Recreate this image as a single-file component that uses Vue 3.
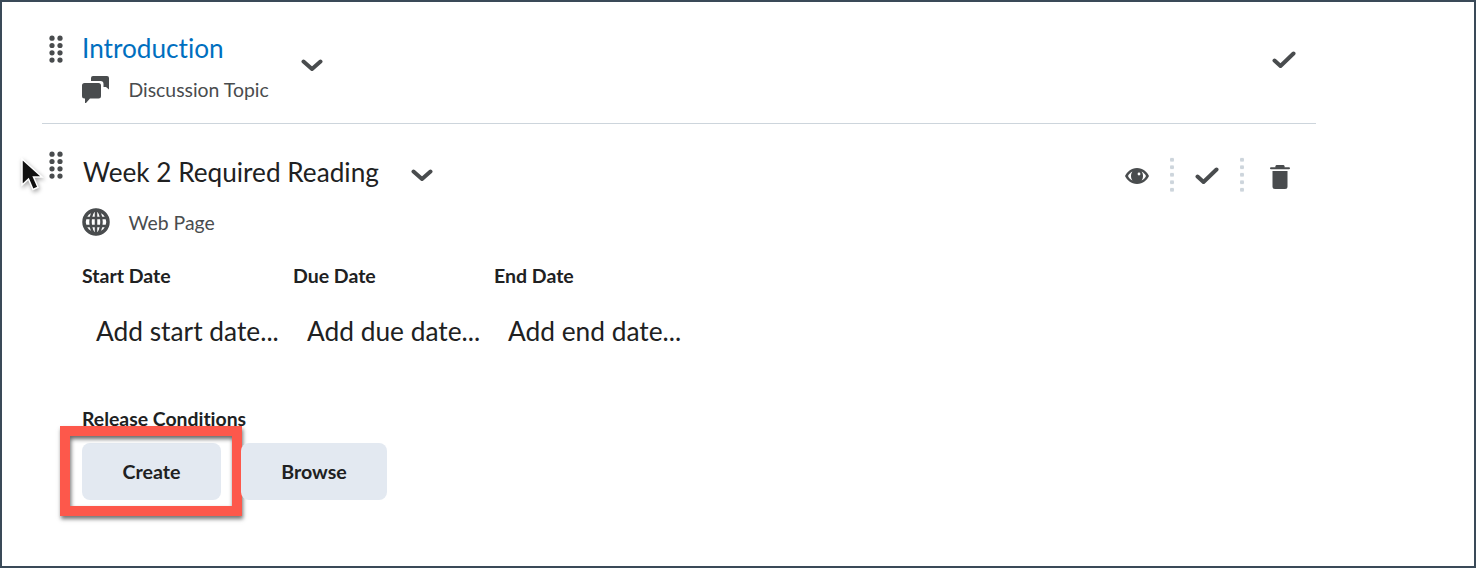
<template>
  <div class="frame">
    <section class="topic first">
      <svg class="grip" viewBox="0 0 14 28"><g fill="#494c4e"><circle v-for="d in gripDots" :key="d.id" :cx="d.x" :cy="d.y" r="2.6" /></g></svg>
      <div class="info">
        <a class="link">Introduction</a>
        <div class="type">
          <svg class="type-icon" viewBox="0 -1 28 28"><path fill="#494c4e" d="M11 0h14a2 2 0 0 1 2 2v11.500l-3-2.500h-2.500V8a3 3 0 0 0-3-3H9V2a2 2 0 0 1 2-2zM2.500 7h14A2.500 2.500 0 0 1 19 9.500V20a2.500 2.500 0 0 1-2.500 2.500H8l-4 4.500c-.5.400-1 .200-1-.500v-4h-.5A2.500 2.500 0 0 1 0 20V9.500A2.500 2.500 0 0 1 2.500 7z" /></svg>
          <span>Discussion Topic</span>
        </div>
      </div>
      <svg class="chevron first-chevron" viewBox="0 0 22 13"><path d="M2.500 2.500 11 10l8.500-7.500" fill="none" stroke="#494c4e" stroke-width="4" stroke-linecap="round" stroke-linejoin="round" /></svg>
      <svg class="check first-check" viewBox="0 0 24 18"><path d="M2.500 9.500 8.500 15 21.500 2.500" fill="none" stroke="#494c4e" stroke-width="4" stroke-linecap="round" stroke-linejoin="round" /></svg>
    </section>

    <section class="topic second">
      <svg class="cursor" viewBox="0 0 24 36"><path d="M2 2v26l6.500-6 4.500 10.500 5-2.200L13.500 20H22z" fill="#111" stroke="#fff" stroke-width="1.500" /></svg>
      <svg class="grip" viewBox="0 0 14 28"><g fill="#494c4e"><circle v-for="d in gripDots" :key="d.id" :cx="d.x" :cy="d.y" r="2.6" /></g></svg>
      <div class="body">
        <div class="head">
          <h2>Week 2 Required Reading</h2>
          <svg class="chevron" viewBox="0 0 22 13"><path d="M2.500 2.500 11 10l8.500-7.500" fill="none" stroke="#494c4e" stroke-width="4" stroke-linecap="round" stroke-linejoin="round" /></svg>
          <div class="actions">
            <svg class="eye" viewBox="0 0 24 16"><path fill="#494c4e" fill-rule="evenodd" d="M12 0C6 0 2 4 0 8c2 4 6 8 12 8s10-4 12-8c-2-4-6-8-12-8zM7.500 3.500C5.500 4.500 4 6 3 8c1 2 2.500 3.500 4.500 4.500C6.500 11.500 6 9.700 6 8s.5-3.500 1.500-4.500zM16.500 3.500c1 1 1.500 2.800 1.500 4.500s-.5 3.500-1.500 4.500c2-1 3.500-2.500 4.500-4.500-1-2-2.500-3.500-4.500-4.500zM14 4.600a1.400 1.400 0 1 0 0 2.800 1.400 1.400 0 0 0 0-2.800z" /></svg>
            <span class="sep"></span>
            <svg class="check" viewBox="0 0 24 18"><path d="M2.500 9.500 8.500 15 21.500 2.500" fill="none" stroke="#494c4e" stroke-width="4" stroke-linecap="round" stroke-linejoin="round" /></svg>
            <span class="sep"></span>
            <svg class="trash" viewBox="0 0 20 24"><path fill="#494c4e" d="M7 0h6a1.500 1.500 0 0 1 1.500 2.200H19a1 1 0 0 1 0 2H1a1 1 0 0 1 0-2h4.500A1.500 1.500 0 0 1 7 0zM2.500 6h15v15.500A2.500 2.500 0 0 1 15 24H5a2.500 2.500 0 0 1-2.500-2.500z" /></svg>
          </div>
        </div>
        <div class="type web">
          <svg class="type-icon" viewBox="0 0 28 28"><g fill="none" stroke="#494c4e"><circle cx="14" cy="14" r="12" stroke-width="3.500" /><ellipse cx="14" cy="14" rx="5.500" ry="12" stroke-width="2.500" /><path d="M2 10h24M2 18h24M14 2v24" stroke-width="2.500" /></g></svg>
          <span>Web Page</span>
        </div>
        <div class="dates">
          <div v-for="d in dates" :key="d.label" class="date" :style="{ width: d.width + 'px' }">
            <div class="date-label">{{ d.label }}</div>
            <div class="date-value">{{ d.value }}</div>
          </div>
        </div>
        <div class="release">Release Conditions</div>
        <div class="buttons">
          <button class="btn create">
            Create
            <span class="highlight"></span>
          </button>
          <button class="btn browse">Browse</button>
        </div>
      </div>
    </section>
  </div>
</template>

<script setup>
const gripDots = [];
for (let row = 0; row < 4; row++) {
  for (let col = 0; col < 2; col++) {
    gripDots.push({ id: row + "-" + col, x: 3 + col * 8, y: 3.2 + row * 7.3 });
  }
}
const dates = [
  { label: "Start Date", value: "Add start date...", width: 211 },
  { label: "Due Date", value: "Add due date...", width: 201 },
  { label: "End Date", value: "Add end date...", width: 200 },
];
</script>

<style>
html,
body {
  margin: 0;
  background: #fff;
}
</style>

<style scoped>
.frame {
  width: 1476px;
  height: 568px;
  box-sizing: border-box;
  border: 2px solid #3a4a58;
  background: #fff;
  font-family: Lato, "Liberation Sans", sans-serif;
  font-variant-ligatures: none;
  color: #202122;
  overflow: hidden;
}
.topic {
  position: relative;
  display: flex;
  align-items: flex-start;
  margin-left: 40px;
  width: 1274px;
}
.first {
  height: 121px;
  border-bottom: 1px solid #cdd5dc;
  box-sizing: content-box;
}
.grip {
  width: 14px;
  height: 28px;
  margin-left: 7px;
  flex: none;
}
.first .grip {
  margin-top: 33px;
}
.second .grip {
  margin-top: 27px;
}
.info {
  margin-left: 19px;
  margin-top: 29px;
}
.link {
  display: block;
  font-size: 26.2px;
  line-height: 34px;
  color: #006fbf;
}
.type {
  display: flex;
  align-items: center;
  font-size: 19.4px;
  color: #494c4e;
  margin-top: 10px;
}
.type-icon {
  width: 28px;
  height: 28px;
  margin-right: 18.500px;
  flex: none;
}
.first-chevron {
  margin-left: 32px;
  margin-top: 57px;
}
.chevron {
  width: 22px;
  height: 13px;
  flex: none;
}
.check {
  width: 24px;
  height: 18px;
  flex: none;
}
.first-check {
  margin-left: auto;
  margin-right: 20px;
  margin-top: 49px;
}
.body {
  flex: 1;
  margin-left: 19px;
  min-width: 0;
}
.head {
  display: flex;
  align-items: center;
  height: 40px;
  margin-top: 28px;
}
h2 {
  margin: 0 0 0 1px;
  font-size: 26.2px;
  font-weight: 400;
  color: #202122;
}
.head .chevron {
  margin-left: 32px;
  margin-top: 6px;
}
.actions {
  margin-left: auto;
  margin-right: 26px;
  margin-top: 8px;
  display: flex;
  align-items: center;
}
.eye {
  width: 24px;
  height: 16px;
}
.sep {
  width: 4px;
  height: 37.500px;
  margin: 0 21px 2px 21px;
  background-image: radial-gradient(circle, #cdd5dc 2px, transparent 2.200px);
  background-size: 4px 7.500px;
}
.trash {
  width: 20px;
  height: 24px;
  margin-left: 5px;
  margin-top: 2px;
}
.web {
  margin-top: 16px;
}
.dates {
  display: flex;
  margin-top: 28px;
}
.date-label {
  font-size: 19.500px;
  font-weight: 700;
  line-height: 24px;
}
.date-value {
  font-size: 26.300px;
  line-height: 32px;
  margin-top: 27px;
  margin-left: 14px;
  white-space: nowrap;
}
.release {
  font-size: 19.400px;
  font-weight: 700;
  line-height: 24px;
  margin-top: 60px;
}
.buttons {
  display: flex;
  gap: 20px;
  margin-top: 12px;
}
.btn {
  position: relative;
  height: 57px;
  border: 0;
  border-radius: 8px;
  background: #e3e9f1;
  color: #202122;
  font-family: inherit;
  font-size: 19.600px;
  font-weight: 700;
  padding: 0;
}
.create {
  width: 139px;
}
.browse {
  width: 146px;
}
.highlight {
  position: absolute;
  left: -22px;
  top: -17px;
  width: 182px;
  height: 90px;
  box-sizing: border-box;
  border: 10px solid #fd584b;
  box-shadow: 1px 3px 4px rgba(0, 0, 0, 0.55), inset 1px 3px 4px rgba(0, 0, 0, 0.6);
}
.cursor {
  position: absolute;
  left: -22px;
  top: 33px;
  width: 24px;
  height: 36px;
  filter: drop-shadow(1px 2px 2px rgba(0, 0, 0, 0.35));
}
</style>
